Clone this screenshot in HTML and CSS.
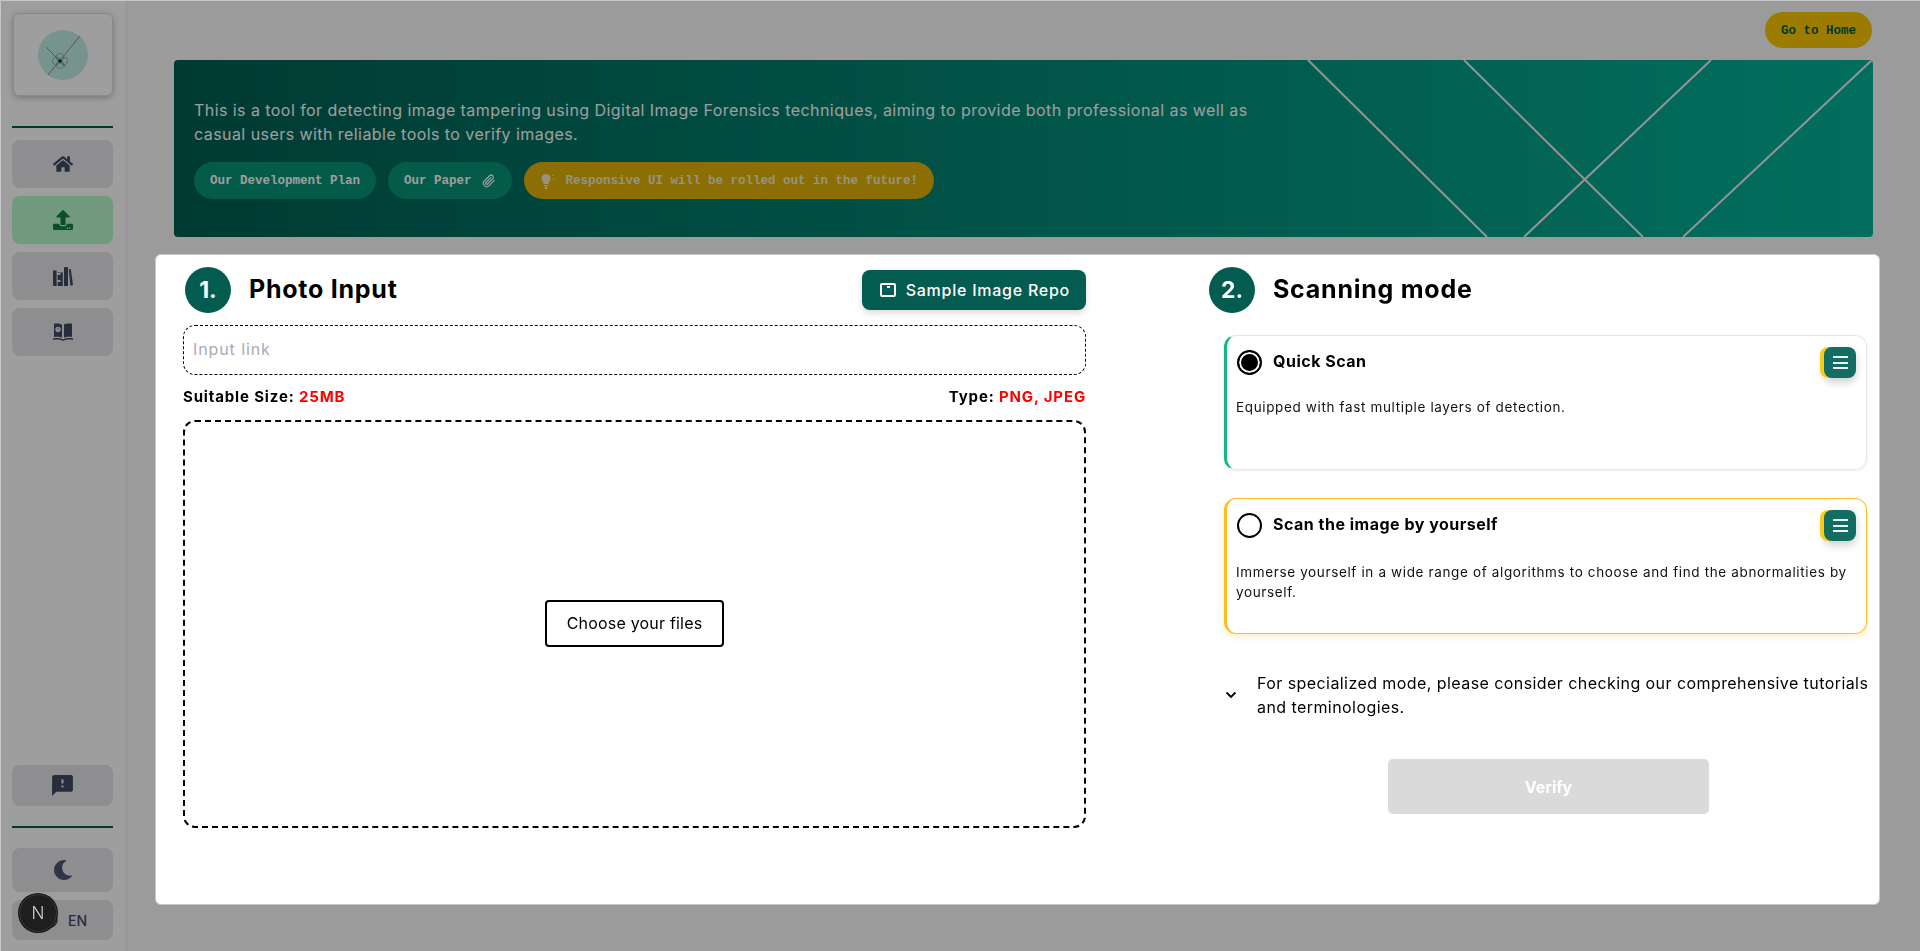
FILE: index.html
```html
<!DOCTYPE html>
<html lang="en">
<head>
<meta charset="UTF-8">
<meta name="viewport" content="width=device-width, initial-scale=1.0">
<title>Image Forensics</title>
<link rel="stylesheet" href="styles.css">
</head>
<body>

<div class="backdrop"></div>

<div class="shell">
  <aside class="sidebar">
    <div class="logo-card">
      <svg class="logo" viewBox="0 0 50 50">
        <circle cx="25" cy="25" r="25" fill="#bfeee4"/>
        <circle cx="22" cy="27.200" r="3.800" fill="none" stroke="#5f938a" stroke-width="0.6"/>
        <circle cx="18.200" cy="31" r="3.800" fill="none" stroke="#5f938a" stroke-width="0.6"/>
        <circle cx="25.800" cy="31" r="3.800" fill="none" stroke="#5f938a" stroke-width="0.6"/>
        <circle cx="22" cy="34.800" r="3.800" fill="none" stroke="#5f938a" stroke-width="0.6"/>
        <line x1="42" y1="6" x2="10" y2="45" stroke="#a57878" stroke-width="0.9"/>
        <line x1="8" y1="17" x2="28" y2="37" stroke="#a57878" stroke-width="0.9"/>
        <circle cx="22" cy="31" r="1.800" fill="#00443a"/>
      </svg>
    </div>
    <div class="rule rule-top"></div>
    <nav class="nav">
      <a class="nav-btn">
        <svg class="icon" width="20" height="18" viewBox="0 0 576 512"><path d="M280.37 148.26L96 300.11V464a16 16 0 0 0 16 16l112.06-.29a16 16 0 0 0 15.92-16V368a16 16 0 0 1 16-16h64a16 16 0 0 1 16 16v95.64a16 16 0 0 0 16 16.05L464 480a16 16 0 0 0 16-16V300L295.67 148.26a12.19 12.19 0 0 0-15.3 0zM571.6 251.47L488 182.56V44.05a12 12 0 0 0-12-12h-56a12 12 0 0 0-12 12v72.61L318.47 43a48 48 0 0 0-61 0L4.34 251.47a12 12 0 0 0-1.6 16.9l25.5 31A12 12 0 0 0 45.15 301l235.22-193.74a12.19 12.19 0 0 1 15.3 0L530.9 301a12 12 0 0 0 16.9-1.6l25.5-31a12 12 0 0 0-1.7-16.93z"/></svg>
      </a>
      <a class="nav-btn nav-active">
        <svg class="icon" width="20" height="20" viewBox="0 0 512 512"><path d="M296 384h-80c-13.3 0-24-10.7-24-24V192h-87.7c-17.8 0-26.7-21.5-14.1-34.1L242.3 5.7c7.5-7.5 19.8-7.5 27.3 0l152.2 152.2c12.6 12.6 3.7 34.1-14.1 34.1H320v168c0 13.3-10.7 24-24 24zm216-8v112c0 13.3-10.7 24-24 24H24c-13.3 0-24-10.7-24-24V376c0-13.3 10.7-24 24-24h136v8c0 30.9 25.1 56 56 56h80c30.9 0 56-25.1 56-56v-8h136c13.3 0 24 10.7 24 24zm-124 88c0-11-9-20-20-20s-20 9-20 20 9 20 20 20 20-9 20-20zm64 0c0-11-9-20-20-20s-20 9-20 20 9 20 20 20 20-9 20-20z"/></svg>
      </a>
      <a class="nav-btn">
        <svg class="icon" width="20" height="19" viewBox="0 0 20 19"><path d="M0 3.500h3.600V19H1a1 1 0 0 1-1-1zM4.600 5.500h5.200V19H4.600V15h2.900v-2H4.600V8h2.900V6H4.600zM11 1a1 1 0 0 1 1-1h2a1 1 0 0 1 1 1v18h-4zM15.800 2.400l2-.4L20 18l-2.600.8z"/></svg>
      </a>
      <a class="nav-btn">
        <svg class="icon" width="20" height="18" viewBox="0 0 20 18"><path d="M11 1.200C13 .4 16.500 .2 19 .8V14c-2.500-.5-6-.4-8 .6z"/><path d="M9 1.700V14.600C7 13.600 3.500 13.500 1 14V.8C3.500.2 7 .4 9 1.700z"/><circle cx="5" cy="6.500" r="2.700" fill="#e6e6e8"/><path d="M4.700 4.800h.7v1.900H4.700z"/><path d="M0 15.500c3-.7 7-.7 10 1 3-1.700 7-1.700 10-1V17c-3-.7-7-.5-10 1-3-1.500-7-1.700-10-1z"/></svg>
      </a>
    </nav>
    <div class="side-bottom">
      <a class="nav-btn btn-feedback">
        <svg class="icon" width="25" height="25" viewBox="0 0 24 24"><path d="M20 2H4c-1.100 0-1.990.9-1.990 2L2 22l4-4h14c1.100 0 2-.9 2-2V4c0-1.100-.9-2-2-2zm-7 12h-2v-2h2v2zm0-4h-2V6h2v4z"/></svg>
      </a>
      <div class="rule rule-bottom"></div>
      <a class="nav-btn btn-theme">
        <svg class="icon icon-moon" width="20" height="20" viewBox="0 0 512 512"><path d="M283.211 512c78.962 0 151.079-35.925 198.857-94.792 7.068-8.708-.639-21.43-11.562-19.35-124.203 23.654-238.262-71.576-238.262-196.954 0-72.222 38.662-138.635 101.498-174.394 9.686-5.512 7.25-20.197-3.756-22.23A258.156 258.156 0 0 0 283.211 0c-141.309 0-256 114.511-256 256 0 141.309 114.511 256 256 256z"/></svg>
      </a>
      <a class="nav-btn btn-lang">
        <svg class="globe" width="16" height="16" viewBox="0 0 16 16" fill="none" stroke="#404a63" stroke-width="1.500"><circle cx="8" cy="8" r="7"/><path d="M1 8h14M8 1c4 4 4 10 0 14M8 1c-4 4-4 10 0 14"/></svg>
        <span class="lang-text">EN</span>
        <span class="next-badge">N</span>
      </a>
    </div>
  </aside>

  <main class="content">
    <div class="topbar">
      <a class="home-link">Go to Home</a>
    </div>

    <section class="banner">
      <svg class="banner-lines" viewBox="0 0 1699 177" preserveAspectRatio="none">
        <line x1="1134" y1="0" x2="1313" y2="177"/>
        <line x1="1290" y1="0" x2="1469" y2="177"/>
        <line x1="1537" y1="0" x2="1350" y2="177"/>
        <line x1="1698" y1="0" x2="1509" y2="177"/>
      </svg>
      <p class="banner-text">This is a tool for detecting image tampering using Digital Image Forensics techniques, aiming to provide both professional as well as casual users with reliable tools to verify images.</p>
      <div class="chips">
        <a class="chip">Our Development Plan</a>
        <a class="chip">Our Paper
          <svg class="chip-clip" width="14" height="14" viewBox="0 0 24 24" fill="none" stroke="currentColor" stroke-width="2" stroke-linecap="round"><path d="M21 11l-9 9a5.500 5.500 0 0 1-8-8l9-9a3.700 3.700 0 0 1 5.300 5.200l-9 9a1.800 1.800 0 0 1-2.600-2.600l8.300-8.300"/></svg>
        </a>
        <a class="chip chip-notice">
          <svg class="chip-icon" width="16" height="15" viewBox="0 0 16 15"><path d="M6 0a4.500 4.500 0 0 1 2.700 8.100V10H3.300V8.100A4.500 4.500 0 0 1 6 0zM3.500 11h5v1.200h-5zM4.500 13h3l-.8 2H5.300z"/><path d="M12 1l1 1M13 5h1.500" stroke="currentColor" fill="none"/></svg>
          Responsive UI will be rolled out in the future!
        </a>
      </div>
    </section>

    <section class="panel">
      <div class="photo-col">
        <div class="col-head photo-head">
          <span class="step">1.</span>
          <h2 class="col-title">Photo Input</h2>
          <a class="repo-btn">
            <svg width="16" height="14" viewBox="0 0 16 14" fill="none" stroke="#fff" stroke-width="2"><rect x="1" y="1" width="14" height="12" rx="1"/><path d="M7 4h3"/></svg>
            Sample Image Repo
          </a>
        </div>
        <input class="link-input" type="text" placeholder="Input link">
        <div class="limits">
          <span>Suitable Size: <em>25MB</em></span>
          <span>Type: <em>PNG, JPEG</em></span>
        </div>
        <div class="dropzone">
          <button class="choose-btn" type="button">Choose your files</button>
        </div>
      </div>

      <div class="scan-col">
        <div class="col-head scan-head">
          <span class="step">2.</span>
          <h2 class="col-title">Scanning mode</h2>
        </div>
        <div class="options">
          <div class="option option-quick">
            <div class="option-head">
              <span class="radio radio-on"></span>
              <h3 class="option-title">Quick Scan</h3>
              <button class="menu-btn" type="button"><i></i><i></i><i></i></button>
            </div>
            <p class="option-desc">Equipped with fast multiple layers of detection.</p>
          </div>
          <div class="option option-manual">
            <div class="option-head">
              <span class="radio"></span>
              <h3 class="option-title">Scan the image by yourself</h3>
              <button class="menu-btn" type="button"><i></i><i></i><i></i></button>
            </div>
            <p class="option-desc">Immerse yourself in a wide range of algorithms to choose and find the abnormalities by yourself.</p>
          </div>
          <div class="note">
            <svg class="note-arrow" width="12" height="8" viewBox="0 0 12 8" fill="none" stroke="#000" stroke-width="1.800"><path d="M1.500 1.500L6 6l4.500-4.500"/></svg>
            <p>For specialized mode, please consider checking our comprehensive tutorials and terminologies.</p>
          </div>
          <button class="verify-btn" type="button" disabled>Verify</button>
        </div>
      </div>
    </section>
  </main>
</div>

</body>
</html>
```

FILE: styles.css
```css
* {
  box-sizing: border-box;
}

html, body {
  height: 100%;
}

body {
  margin: 0;
  overflow: hidden;
  background-color: #c6c6c6;
  font-family: Inter, "Open Sans", sans-serif;
  color: #000;
}

.backdrop {
  position: fixed;
  top: 1px;
  left: 1px;
  right: 0;
  bottom: 0;
  z-index: 10;
  background-color: rgba(0, 0, 0, 0.38);
}

.shell {
  display: flex;
  height: 950px;
  margin: 1px 0 0 1px;
  background-color: #fafafa;
}

/* sidebar */
.sidebar {
  display: flex;
  flex-direction: column;
  flex: none;
  width: 126px;
  height: 950px;
  padding: 12px 13px 11px 11px;
  background-color: #fff;
  border-right: 1px solid #ececec;
}

.logo-card {
  display: flex;
  justify-content: center;
  align-items: center;
  width: 100px;
  height: 83px;
  margin-left: 1px;
  background-color: #fff;
  border: 1px solid #ddd;
  border-radius: 6px;
  box-shadow: 0 2px 6px rgba(0, 0, 0, 0.25);
}

.logo {
  width: 50px;
  height: 50px;
}

.rule {
  height: 2px;
  background-color: #005e50;
}

.rule-top {
  margin: 30px 0 12px;
}

.nav {
  display: flex;
  flex-direction: column;
  gap: 8px;
}

.nav-btn {
  position: relative;
  display: flex;
  justify-content: center;
  align-items: center;
  height: 48px;
  background-color: #e6e6e8;
  border-radius: 8px;
}

.icon {
  fill: #404a63;
}

.nav-active {
  background-color: #b5f7cc;
}

.nav-active .icon {
  fill: #15803d;
}

.side-bottom {
  margin-top: auto;
  display: flex;
  flex-direction: column;
}

.btn-feedback {
  height: 41px;
}

.rule-bottom {
  margin: 20px 0;
}

.btn-theme {
  height: 44px;
  margin-bottom: 8px;
}

.icon-moon {
  fill: #4b5670;
}

.btn-lang {
  height: 40px;
  justify-content: flex-start;
  gap: 10px;
  padding-left: 30px;
}

.lang-text {
  font-size: 14px;
  font-weight: 500;
  color: #404a63;
}

.next-badge {
  position: absolute;
  top: -6px;
  left: 7px;
  z-index: 20;
  display: flex;
  justify-content: center;
  align-items: center;
  width: 38px;
  height: 38px;
  border-radius: 50%;
  background-color: #1e1e1e;
  border: 1px solid #3a3a3a;
  box-shadow: 0 0 0 1px #111;
  color: #cfcfcf;
  font-size: 17px;
  font-weight: 300;
}

/* main column */
.content {
  flex: 1;
  min-width: 0;
  padding: 11px 40px 0 28px;
}

.topbar {
  display: flex;
  justify-content: flex-end;
  margin-right: 8px;
  margin-bottom: 12px;
}

.home-link {
  display: flex;
  align-items: center;
  height: 36px;
  padding: 2px 16px 0;
  background-color: #fbc800;
  border-radius: 18px;
  font-family: "Liberation Mono", monospace;
  font-size: 12.5px;
  font-weight: 700;
  color: #005e4c;
}

.banner {
  position: relative;
  height: 177px;
  margin: 0 7px 17px 19px;
  padding: 38px 20px 0;
  overflow: hidden;
  background: linear-gradient(90deg, #005e52, #05b398);
  border-radius: 4px;
}

.banner-lines {
  position: absolute;
  top: 0;
  left: 0;
  width: 100%;
  height: 100%;
}

.banner-lines line {
  stroke: #f0eeee;
  stroke-width: 2;
}

.banner-text {
  position: relative;
  width: 1075px;
  margin: 0;
  font-size: 16px;
  letter-spacing: 0.44px;
  line-height: 24px;
  color: #fff;
}

.chips {
  display: flex;
  gap: 12px;
  margin-top: 16px;
}

.chip {
  display: flex;
  align-items: center;
  gap: 10px;
  height: 37px;
  padding: 1px 16px 0;
  background-color: #089377;
  border-radius: 19px;
  font-family: "Liberation Mono", monospace;
  font-size: 12.5px;
  font-weight: 700;
  color: #fff;
}

.chip-notice {
  background-color: #e0b208;
  color: #f4eccf;
}

.chip-icon {
  fill: currentColor;
}

/* white panel over the backdrop */
.panel {
  position: relative;
  z-index: 20;
  display: flex;
  gap: 123px;
  height: 651px;
  padding: 12px 13px 0 27px;
  background-color: #fff;
  border: 1px solid #c8c8c8;
  border-radius: 6px;
}

.photo-col {
  flex: none;
  width: 903px;
}

.scan-col {
  flex: 1;
  min-width: 0;
}

.col-head {
  display: flex;
  align-items: center;
  height: 46px;
}

.photo-head {
  padding-left: 2px;
}

.scan-head {
  margin-bottom: 22px;
}

.step {
  display: flex;
  justify-content: center;
  align-items: center;
  flex: none;
  width: 46px;
  height: 46px;
  margin-right: 18px;
  background-color: #035c4f;
  border-radius: 50%;
  color: #fff;
  font-size: 23px;
  font-weight: 700;
}

.col-title {
  margin: 0;
  padding-bottom: 2px;
  font-size: 25px;
  font-weight: 700;
  letter-spacing: 0.75px;
  line-height: 44px;
}

.repo-btn {
  display: flex;
  align-items: center;
  gap: 10px;
  height: 40px;
  margin-left: auto;
  padding: 0 16px 1px 18px;
  background-color: #035c4f;
  border-radius: 8px;
  box-shadow: 0 3px 6px rgba(0, 0, 0, 0.15);
  color: #fff;
  font-size: 16px;
  font-weight: 500;
  letter-spacing: 0.75px;
}

.link-input {
  display: block;
  width: 100%;
  height: 50px;
  margin-top: 12px;
  padding: 0 9px 2px;
  border: 1px dashed #000;
  border-radius: 12px;
  font-family: inherit;
  font-size: 16px;
  letter-spacing: 0.9px;
  outline: none;
}

.link-input::placeholder {
  color: #a6abb8;
}

.limits {
  display: flex;
  justify-content: space-between;
  align-items: center;
  height: 45px;
  padding-bottom: 2px;
  font-size: 15px;
  font-weight: 700;
  letter-spacing: 0.85px;
}

.limits em {
  font-style: normal;
  color: #f00;
}

.dropzone {
  display: flex;
  justify-content: center;
  align-items: center;
  height: 408px;
  border: 2px dashed #000;
  border-radius: 12px;
}

.choose-btn {
  width: 179px;
  height: 47px;
  margin-bottom: 2px;
  background-color: #fff;
  border: 2px solid #000;
  border-radius: 4px;
  font-family: inherit;
  font-size: 16px;
  letter-spacing: 0.2px;
  cursor: pointer;
}

.options {
  margin-left: 15px;
  width: 643px;
}

.option {
  height: 135px;
  padding: 11px 10px 0 9px;
  border: 1px solid #e5e7eb;
  border-left: 3px solid #10b981;
  border-radius: 12px;
  box-shadow: 0 1px 3px rgba(0, 0, 0, 0.08);
}

.option-manual {
  height: 136px;
  margin-top: 28px;
  border: 1px solid #fbbf24;
  border-left: 3px solid #fbbf24;
  box-shadow: 0 3px 6px rgba(251, 191, 36, 0.25);
}

.option-head {
  display: flex;
  align-items: flex-start;
}

.radio {
  flex: none;
  width: 25px;
  height: 25px;
  margin: 3px 0 0 1px;
  border: 2px solid #000;
  border-radius: 50%;
}

.radio-on {
  background-color: #000;
  box-shadow: inset 0 0 0 2px #fff;
}

.option-title {
  margin: 2px 0 0 11px;
  font-size: 16px;
  font-weight: 700;
  letter-spacing: 0.5px;
  line-height: 25px;
}

.menu-btn {
  display: flex;
  flex-direction: column;
  justify-content: center;
  align-items: center;
  gap: 3.500px;
  width: 32px;
  height: 31px;
  margin-left: auto;
  padding: 0;
  background-color: #146d62;
  border: none;
  border-radius: 8px;
  box-shadow: -4px 0 0 #facc15, 0 4px 8px rgba(0, 0, 0, 0.2);
  cursor: pointer;
}

.menu-btn i {
  display: block;
  width: 15px;
  height: 2px;
  background-color: #e8f5f2;
}

.option-desc {
  margin: 19px 0 0;
  font-size: 13.500px;
  letter-spacing: 0.64px;
  line-height: 20px;
  color: #111;
}

.option-manual .option-desc {
  margin-top: 21px;
}

.note {
  display: flex;
  align-items: center;
  gap: 20px;
  margin: 37px -2px 0 0;
  padding-left: 1px;
}

.note-arrow {
  flex: none;
}

.note p {
  margin: 0;
  font-size: 16px;
  letter-spacing: 0.43px;
  line-height: 24px;
}

.verify-btn {
  display: block;
  width: 321px;
  height: 55px;
  margin: 40px 0 0 164px;
  background-color: #dadada;
  border: none;
  border-radius: 5px;
  font-family: inherit;
  font-size: 16px;
  font-weight: 700;
  color: #fff;
}
```
